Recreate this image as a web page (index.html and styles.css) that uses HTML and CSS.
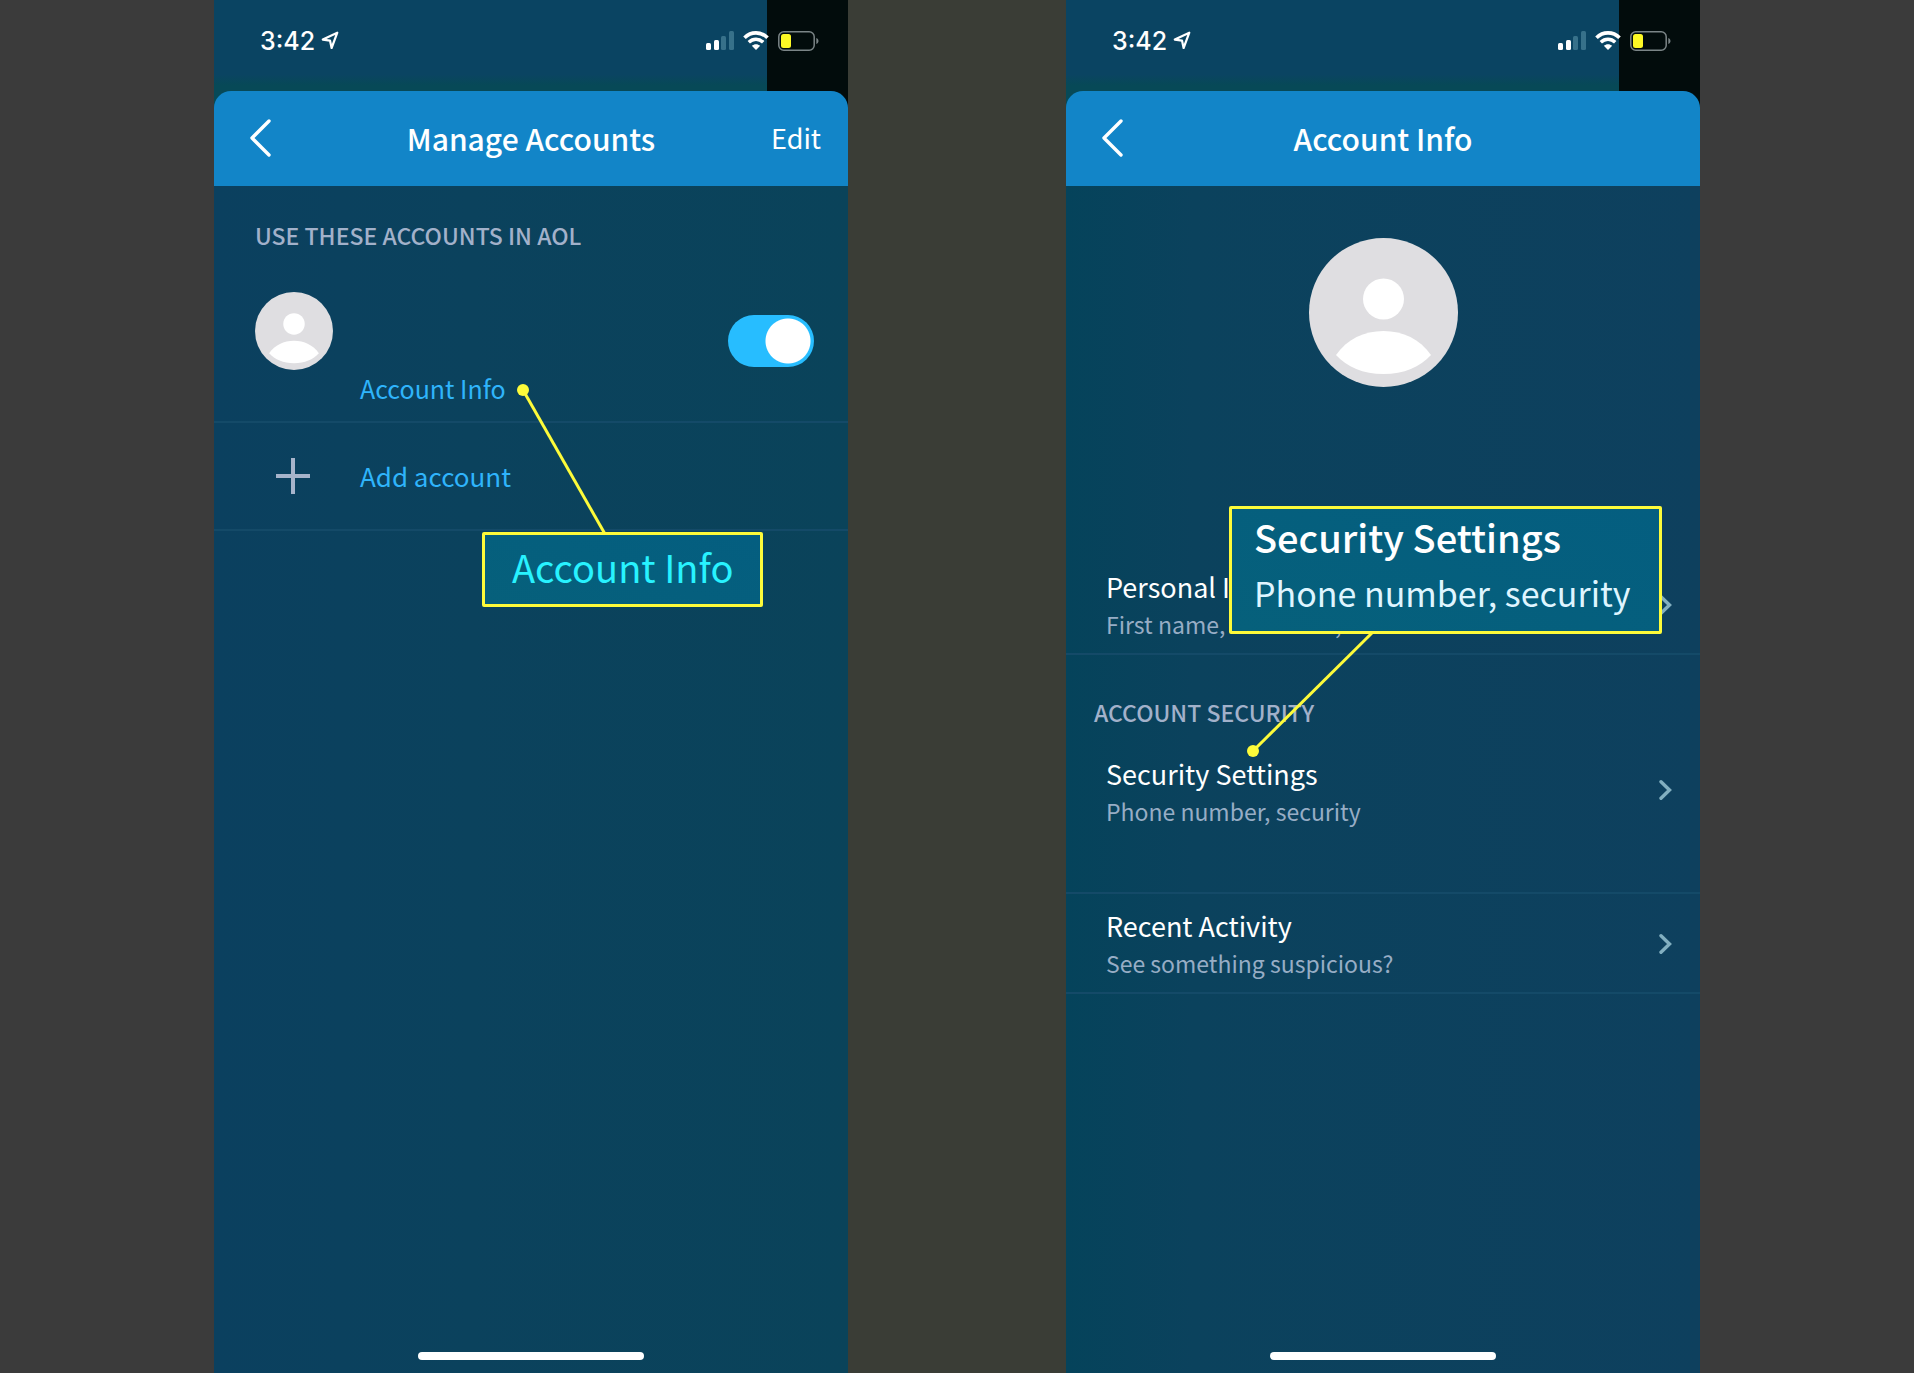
FILE: index.html
```html
<!DOCTYPE html>
<html lang="en">
<head>
<meta charset="utf-8">
<title>AOL account settings</title>
<link rel="stylesheet" href="styles.css">
</head>
<body>
<svg width="0" height="0" class="sprite" aria-hidden="true">
  <symbol id="avatar" viewBox="0 0 149 149">
    <circle cx="74.500" cy="74.500" r="74.500" fill="#dfdee1"/>
    <circle cx="74.500" cy="61" r="20.500" fill="#fff"/>
    <path d="M27 117C38 101 55 93 74.500 93S111 101 122 117C111 129 95 136 74.500 136S38 129 27 117Z" fill="#fff"/>
  </symbol>
  <symbol id="location" viewBox="0 0 18 19">
    <path d="M16.300 1.700L1.800 8.600L9 9.600L10.600 17Z" fill="none" stroke="#fff" stroke-width="2.200" stroke-linejoin="round"/>
  </symbol>
  <symbol id="signal" viewBox="0 0 28 19">
    <rect x="0" y="12" width="5" height="7" rx="1.500" fill="#fff"/>
    <rect x="8" y="9" width="5" height="10" rx="1.500" fill="#fff"/>
    <rect x="15" y="5" width="5" height="14" rx="1.500" fill="#37718a"/>
    <rect x="23" y="0" width="5" height="19" rx="1.500" fill="#37718a"/>
  </symbol>
  <symbol id="wifi" viewBox="0 0 26 19">
    <path d="M1.500 6.800C8 .2 18 .2 24.500 6.800" fill="none" stroke="#fff" stroke-width="3.600"/>
    <path d="M5.800 11.200C10 7.200 16 7.200 20.200 11.200" fill="none" stroke="#fff" stroke-width="3.400"/>
    <path d="M13 19L8.800 14.700C11.300 12.600 14.700 12.600 17.200 14.700Z" fill="#fff"/>
  </symbol>
  <symbol id="battery" viewBox="0 0 41 20">
    <rect x=".8" y=".8" width="35.400" height="18.400" rx="5" fill="none" stroke="#7b8587" stroke-width="1.500"/>
    <rect x="3" y="3" width="10" height="14" rx="2.500" fill="#fdf925"/>
    <path d="M38.300 7C41.200 8 41.200 12 38.300 13Z" fill="#7b8587"/>
  </symbol>
  <symbol id="back" viewBox="0 0 22 38">
    <path d="M20 2L3 19L20 36" fill="none" stroke="#fff" stroke-width="3.400" stroke-linecap="round" stroke-linejoin="round"/>
  </symbol>
  <symbol id="next" viewBox="0 0 13 20">
    <path d="M2 1.800L10.500 10L2 18.200" fill="none" stroke="#82afc0" stroke-width="3.400" stroke-linecap="round"/>
  </symbol>
</svg>

<main class="stage">
  <section class="phone phone-manage">
    <div class="top">
      <div class="status">
        <span class="time">3:42</span>
        <svg width="18" height="19"><use href="#location"/></svg>
        <div class="indicators">
          <svg width="28" height="19"><use href="#signal"/></svg>
          <svg width="26" height="19"><use href="#wifi"/></svg>
          <svg width="41" height="20"><use href="#battery"/></svg>
        </div>
      </div>
      <header class="bar">
        <button class="back" aria-label="Back"><svg width="22" height="38"><use href="#back"/></svg></button>
        <h1>Manage Accounts</h1>
        <button class="edit">Edit</button>
      </header>
    </div>
    <div class="content">
      <h2 class="label" id="accounts">USE THESE ACCOUNTS IN AOL</h2>
      <div class="account">
        <svg width="78" height="78"><use href="#avatar"/></svg>
        <a class="link" href="#info">Account Info</a>
        <input class="toggle" type="checkbox" role="switch" checked aria-labelledby="accounts">
      </div>
      <a class="add" href="#add">
        <svg width="78" height="36" viewBox="0 0 78 36"><path d="M38 0V36M21 18H55" stroke="#a7b4cb" stroke-width="4" fill="none"/></svg>
        <span>Add account</span>
      </a>
    </div>
    <div class="home"></div>
    <svg class="pointer pointer-info" width="96" height="150" viewBox="0 0 96 150"><path d="M6 6L88 150" stroke="#fdfb3a" stroke-width="3"/><circle cx="6" cy="6" r="6" fill="#fdfb3a"/></svg>
    <div class="callout callout-info">Account Info</div>
  </section>

  <section class="phone phone-info" id="info">
    <div class="top">
      <div class="status">
        <span class="time">3:42</span>
        <svg width="18" height="19"><use href="#location"/></svg>
        <div class="indicators">
          <svg width="28" height="19"><use href="#signal"/></svg>
          <svg width="26" height="19"><use href="#wifi"/></svg>
          <svg width="41" height="20"><use href="#battery"/></svg>
        </div>
      </div>
      <header class="bar">
        <button class="back" aria-label="Back"><svg width="22" height="38"><use href="#back"/></svg></button>
        <h1>Account Info</h1>
      </header>
    </div>
    <div class="content">
      <div class="profile"><svg width="149" height="149"><use href="#avatar"/></svg></div>
      <a class="row" href="#personal">
        <span class="text"><span class="name">Personal Info</span><span class="detail">First name, last name, date of birth</span></span>
        <svg width="13" height="20"><use href="#next"/></svg>
      </a>
      <h2 class="label">ACCOUNT SECURITY</h2>
      <a class="row" href="#security">
        <span class="text"><span class="name">Security Settings</span><span class="detail">Phone number, security</span></span>
        <svg width="13" height="20"><use href="#next"/></svg>
      </a>
      <a class="row" href="#activity">
        <span class="text"><span class="name">Recent Activity</span><span class="detail">See something suspicious?</span></span>
        <svg width="13" height="20"><use href="#next"/></svg>
      </a>
    </div>
    <div class="home"></div>
    <svg class="pointer pointer-security" width="126" height="126" viewBox="0 0 126 126"><path d="M6 120L126 1" stroke="#fdfb3a" stroke-width="3"/><circle cx="6" cy="120" r="6" fill="#fdfb3a"/></svg>
    <div class="callout callout-security">
      <strong>Security Settings</strong>
      <span>Phone number, security</span>
    </div>
  </section>
</main>
</body>
</html>
```
FILE: styles.css
```css
* {
  box-sizing: border-box;
}

body {
  margin: 0;
  background: linear-gradient(90deg, #3b3b3b 0 30%, #3a3d36 40% 60%, #3b3b3b 80%);
  color: #fff;
  font-family: "Noto Sans CJK JP", "Noto Sans", sans-serif;
}

h1, h2 {
  margin: 0;
  font-weight: 500;
}

a {
  color: inherit;
  text-decoration: none;
}

button {
  padding: 0;
  border: 0;
  background: none;
  color: inherit;
  font: inherit;
}

svg {
  display: block;
  flex: none;
}

.sprite {
  position: absolute;
}

.stage {
  display: grid;
  grid-template-columns: 214fr 634fr 218fr 634fr 214fr;
  min-height: 100vh;
}

.phone {
  position: relative;
  display: flex;
  flex-direction: column;
}

.phone-manage {
  grid-column: 2;
  background: linear-gradient(90deg, #0b405f, #0b425d 40%, #0a435a);
}

.phone-info {
  grid-column: 4;
  background: linear-gradient(90deg, #05435b, #0b425d 20%, #0e405e);
}

.top {
  background: linear-gradient(#0a4462 40%, #074957 85px);
}

.status {
  display: flex;
  align-items: center;
  gap: 6px;
  height: 108px;
  margin-bottom: -17px;
  padding: 0 29px 27px 46px;
  background: linear-gradient(#020c0c, #020c0c) right / 81px 100% no-repeat;
}

.time {
  font: 500 25px/32px Inter, sans-serif;
}

.indicators {
  display: flex;
  align-items: center;
  gap: 9px;
  margin-left: auto;
}

.bar {
  position: relative;
  display: grid;
  grid-template-columns: 72px 1fr 80px;
  align-items: center;
  height: 95px;
  padding: 0 27px 2px 35px;
  border-radius: 17px 17px 0 0;
  background: #1285c8;
}

.bar h1 {
  font-size: 30px;
  line-height: 40px;
  text-align: center;
}

.edit {
  justify-self: end;
  font-size: 27px;
  line-height: 40px;
}

.content {
  flex: 1;
}

.label {
  color: #a2b1ca;
  font-size: 23px;
  line-height: 32px;
}

.phone-manage .label {
  padding: 33px 41px 0;
}

.phone-info .label {
  padding: 41px 28px 14px;
}

.account, .add, .row {
  border-bottom: 2px solid #144a68;
}

.account {
  display: grid;
  grid-template-columns: 78px 1fr auto;
  column-gap: 27px;
  height: 172px;
  padding: 41px 34px 17px 41px;
}

.link, .add {
  color: #2fb4fb;
  font-size: 25px;
  line-height: 32px;
}

.link {
  align-self: end;
}

.toggle {
  appearance: none;
  width: 86px;
  height: 52px;
  margin: 23px 0 0;
  border-radius: 26px;
  background: radial-gradient(circle at 60px 26px, #fff 22px, #27bdff 23px);
}

.add {
  display: flex;
  align-items: center;
  gap: 27px;
  height: 108px;
  padding: 0 41px;
}

.add span {
  font-size: 26px;
}

.profile {
  display: flex;
  justify-content: center;
  height: 369px;
  padding-top: 52px;
}

.row {
  display: flex;
  align-items: center;
  justify-content: space-between;
  padding: 11px 28px 10px 40px;
}

.text {
  display: grid;
  padding-top: 3px;
}

.name {
  font-size: 27px;
  line-height: 36px;
}

.detail {
  color: #97adc5;
  font-size: 23px;
  line-height: 38px;
}

.label + .row {
  align-items: flex-start;
  padding-bottom: 62px;
}

.label + .row svg {
  margin-top: 27px;
}

.home {
  width: 226px;
  height: 8px;
  margin: 0 auto 13px;
  border-radius: 4px;
  background: #fff;
}

.pointer, .callout {
  position: absolute;
}

.callout {
  border: 3px solid #fdfb3a;
  border-radius: 2px;
  background: linear-gradient(20deg, #06607b, #045e80);
}

.pointer-info {
  left: 303px;
  top: 384px;
}

.callout-info {
  left: 268px;
  top: 532px;
  padding: 9px 27px 14px;
  color: #28f2ff;
  font-size: 38px;
  line-height: 46px;
}

.pointer-security {
  left: 181px;
  top: 631px;
}

.callout-security {
  display: grid;
  left: 163px;
  top: 506px;
  padding: 0 28px 10px 22px;
  line-height: 56px;
}

.callout-security strong {
  font-size: 38px;
  font-weight: 500;
}

.callout-security span {
  color: #dff5ff;
  font-size: 34px;
}
```
